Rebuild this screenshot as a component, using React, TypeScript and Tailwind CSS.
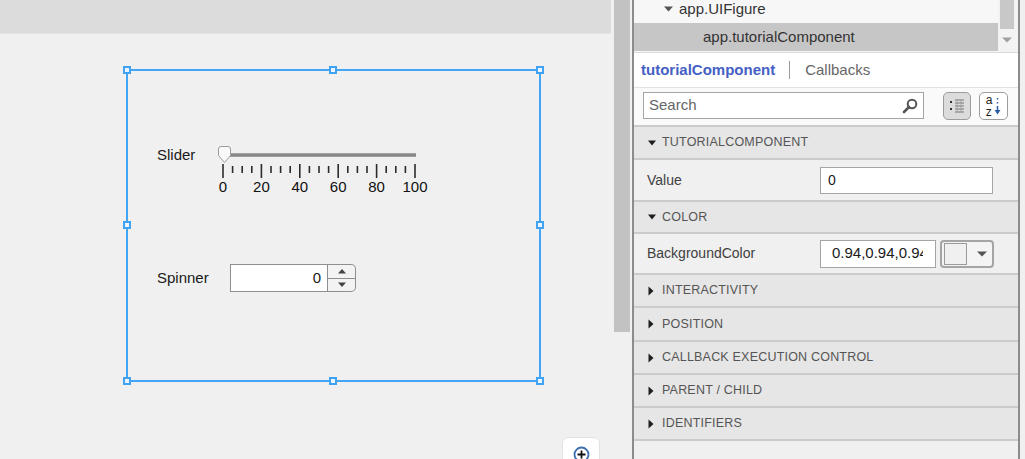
import React from "react";

const font = "font-['Liberation_Sans',Arial,sans-serif]";

function Handle({ x, y }: { x: number; y: number }) {
  return (
    <div
      className="absolute h-[8px] w-[8px] border-2 border-[#3fa2f2] bg-[#eaf5ff]"
      style={{ left: x - 4, top: y - 4 }}
    />
  );
}

function SliderDrawing() {
  const ticks = Array.from({ length: 21 }, (_, i) => i);
  return (
    <svg width="230" height="60" viewBox="0 0 230 60" className="absolute left-[212px] top-[140px]">
      <defs>
        <linearGradient id="trk" x1="0" y1="0" x2="0" y2="1">
          <stop offset="0" stopColor="#b0b0b0" />
          <stop offset="0.5" stopColor="#7c7c7c" />
          <stop offset="1" stopColor="#a8a8a8" />
        </linearGradient>
      </defs>
      <rect x="12" y="13" width="192" height="4" fill="url(#trk)" />
      {ticks.map((i) => {
        const x = 11 + i * 9.6;
        const major = i % 4 === 0;
        return (
          <line
            key={i}
            x1={x}
            x2={x}
            y1={major ? 24 : 26}
            y2={major ? 38 : 33}
            stroke="#2b2b2b"
            strokeWidth="1.6"
          />
        );
      })}
      {[0, 20, 40, 60, 80, 100].map((v, i) => (
        <text
          key={v}
          x={11 + i * 38.4}
          y="52"
          textAnchor="middle"
          fontSize="15"
          fill="#111"
          fontFamily="'Liberation Sans', Arial, sans-serif"
        >
          {v}
        </text>
      ))}
      <path
        d="M6.5 9 Q6.5 6.5 9 6.5 L16 6.5 Q18.5 6.5 18.5 9 L18.5 15.5 L12.5 22.5 L6.5 15.5 Z"
        fill="#f9f9f9"
        stroke="#9a9a9a"
        strokeWidth="1"
      />
    </svg>
  );
}

function Canvas() {
  return (
    <div className="relative h-full w-[611px] bg-[#f0f0f0]">
      <div className="h-[34px] border-b border-[#e6e6e6] bg-[#dcdcdc]" />
      {/* selected component on the design canvas */}
      <div className="absolute left-[126px] top-[69px] h-[313px] w-[415px] border-2 border-[#42a5f5]" />
      {[127, 333, 540].map((x) =>
        [70, 225, 381].map((y) =>
          x === 333 && y === 225 ? null : <Handle key={`${x}-${y}`} x={x} y={y} />
        )
      )}
      <div className="absolute left-[157px] top-[145px] text-[15px] leading-[20px] text-[#1a1a1a]">Slider</div>
      <SliderDrawing />
      <div className="absolute left-[157px] top-[268px] text-[15px] leading-[20px] text-[#1a1a1a]">Spinner</div>
      <div className="absolute left-[230px] top-[264px] flex h-[28px] w-[126px]">
        <div className="flex flex-1 items-center justify-end border border-[#8f8f8f] bg-white pr-[6px] text-[15px] text-[#1a1a1a]">
          0
        </div>
        <div className="flex w-[28px] flex-col rounded-r-[5px] border border-l-0 border-[#8f8f8f] bg-[#f3f3f3]">
          <div className="flex flex-1 items-center justify-center border-b border-[#8f8f8f]">
            <svg width="10" height="6" viewBox="0 0 10 6">
              <path d="M1 5.5 L5 1 L9 5.5 Z" fill="#444" />
            </svg>
          </div>
          <div className="flex flex-1 items-center justify-center">
            <svg width="10" height="6" viewBox="0 0 10 6">
              <path d="M1 0.5 L9 0.5 L5 5 Z" fill="#444" />
            </svg>
          </div>
        </div>
      </div>
      <div className="absolute left-[562px] top-[437px] flex h-[34px] w-[38px] justify-center rounded-md border border-[#e2e2e2] bg-white pt-[8px]">
        <svg width="17" height="17" viewBox="0 0 17 17">
          <circle cx="8.5" cy="8.5" r="7" fill="none" stroke="#3e6fb0" strokeWidth="1.8" />
          <path d="M8.5 4.5 V12.5 M4.5 8.5 H12.5" stroke="#111" strokeWidth="1.8" />
        </svg>
      </div>
    </div>
  );
}

function Caret({ open }: { open: boolean }) {
  return open ? (
    <svg width="8" height="6" viewBox="0 0 8 6">
      <path d="M0 0.5 H8 L4 5.5 Z" fill="#1e1e1e" />
    </svg>
  ) : (
    <svg width="6" height="10" viewBox="0 0 6 10">
      <path d="M0.5 0.5 V9.5 L5.5 5 Z" fill="#1e1e1e" />
    </svg>
  );
}

function Section({ title, open = false, h }: { title: string; open?: boolean; h: string }) {
  return (
    <div className={`flex ${h} items-center gap-[6px] border-b-2 border-[#cbcbcb] bg-[#e6e6e6] pl-[14px] text-[12.5px] tracking-[0.2px] text-[#555]`}>
      <span className="flex w-[8px] justify-start">
        <Caret open={open} />
      </span>
      {title}
    </div>
  );
}

function PropRow({ label, h, children }: { label: string; h: string; children: React.ReactNode }) {
  return (
    <div className={`flex ${h} items-center border-b-2 border-[#cbcbcb] bg-[#f0f0f0] pl-[13px]`}>
      <span className="w-[173px] text-[14px] text-[#404040]">{label}</span>
      {children}
    </div>
  );
}

function Inspector() {
  return (
    <div className="flex h-full w-[388px] flex-col border-x-2 border-[#8c8c8c] bg-[#f0f0f0]">
      {/* component tree */}
      <div className="flex h-[53px] border-b border-[#dadada] bg-[#f7f7f7]">
        <div className="flex flex-1 flex-col overflow-hidden">
          <div className="-mt-[5px] flex h-[28px] items-center gap-[6px] pl-[30px] text-[15px] text-[#333]">
            <svg width="9" height="6" viewBox="0 0 9 6">
              <path d="M0 0.5 H9 L4.5 5.5 Z" fill="#555" />
            </svg>
            app.UIFigure
          </div>
          <div className="flex h-[28px] items-center bg-[#c6c6c6] pl-[69px] text-[15px] text-[#333]">
            app.tutorialComponent
          </div>
        </div>
        <div className="flex w-[20px] flex-col items-center bg-[#f3f3f3] pr-[3px]">
          <div className="h-[29px] w-[14px] bg-[#c8c8c8]" />
          <svg width="10" height="6" viewBox="0 0 10 6" className="mt-[8px]">
            <path d="M0 0.5 H10 L5 5.5 Z" fill="#a0a0a0" />
          </svg>
        </div>
      </div>
      {/* tabs */}
      <div className="flex h-[35px] items-center border-b border-[#e2e2e2] bg-white pl-[7px] text-[15px]">
        <span className="font-bold text-[#4460c4]">tutorialComponent</span>
        <span className="ml-[14px] mr-[15px] h-[18px] w-px bg-[#9a9a9a]" />
        <span className="text-[#666]">Callbacks</span>
      </div>
      {/* search */}
      <div className="flex h-[39px] items-center border-b-2 border-[#cbcbcb] bg-[#fafafa] pb-[2px] pl-[9px]">
        <div className="flex h-[27px] w-[281px] items-center justify-between border border-[#a5a5a5] bg-white pl-[5px] pr-[5px] text-[15px] text-[#666]">
          Search
          <svg width="16" height="16" viewBox="0 0 16 16">
            <circle cx="10" cy="6" r="4.3" fill="none" stroke="#555" strokeWidth="2" />
            <path d="M7 9 L2 14" stroke="#555" strokeWidth="2.6" strokeLinecap="round" />
          </svg>
        </div>
        <div className="ml-[19px] flex h-[28px] w-[28px] items-center justify-center rounded-[5px] border border-[#9c9c9c] bg-[#dcdcdc]">
          <svg width="18" height="18" viewBox="0 0 18 18">
            <rect x="2" y="4" width="2" height="2" fill="#333" />
            <rect x="2" y="11" width="2" height="2" fill="#333" />
            <path d="M7 3 H16 M7 6 H16 M7 9 H16 M7 12 H16 M7 15 H16" stroke="#777" strokeWidth="1" />
            <path d="M9 3 V15 M13 3 V15" stroke="#999" strokeWidth="0.8" />
          </svg>
        </div>
        <div className="ml-[8px] flex h-[28px] w-[29px] items-center justify-center gap-[2px] rounded-[5px] border border-[#9c9c9c] bg-white">
          <div className="flex flex-col text-[12px] leading-[12px] text-[#222]">
            <span>a</span>
            <span>z</span>
          </div>
          <svg width="7" height="20" viewBox="0 0 7 20">
            <path d="M3.5 2 V3.5 M3.5 6 V7.5" stroke="#2a5fa8" strokeWidth="1.5" />
            <path d="M3.5 10 V17" stroke="#2a5fa8" strokeWidth="1.5" />
            <path d="M0.5 14 L3.5 18.5 L6.5 14 Z" fill="#2a5fa8" />
          </svg>
        </div>
      </div>
      <Section title="TUTORIALCOMPONENT" open h="h-[33px]" />
      <PropRow label="Value" h="h-[42px]">
        <div className="flex h-[27px] w-[173px] items-center border border-[#a5a5a5] bg-white pl-[7px] text-[14px] text-[#1a1a1a]">
          0
        </div>
      </PropRow>
      <Section title="COLOR" open h="h-[32px]" />
      <PropRow label="BackgroundColor" h="h-[41px]">
        <div className="flex h-[28px] w-[116px] items-center border border-[#a5a5a5] bg-white pl-[11px] pr-[12px] text-[15px] text-[#1a1a1a]">
          <span className="block w-full overflow-hidden whitespace-nowrap">0.94,0.94,0.94</span>
        </div>
        <div className="ml-[4px] flex h-[28px] w-[54px] items-center rounded-[4px] border-2 border-[#a5a5a5] bg-[#f4f4f4] pl-[2px]">
          <div className="h-[22px] w-[23px] border border-[#9a9a9a] bg-[#f0f0f0]" />
          <svg width="10" height="6" viewBox="0 0 10 6" className="ml-[10px]">
            <path d="M0 0.5 H10 L5 5.5 Z" fill="#555" />
          </svg>
        </div>
      </PropRow>
      <Section title="INTERACTIVITY" h="h-[33px]" />
      <Section title="POSITION" h="h-[34px]" />
      <Section title="CALLBACK EXECUTION CONTROL" h="h-[33px]" />
      <Section title="PARENT / CHILD" h="h-[33px]" />
      <Section title="IDENTIFIERS" h="h-[33px]" />
      <div className="flex-1 bg-[#f0f0f0]" />
    </div>
  );
}

export default function App() {
  return (
    <div className={`flex h-[459px] w-[1025px] overflow-hidden bg-[#f0f0f0] ${font}`}>
      <Canvas />
      <div className="flex w-[21px] justify-center bg-[#f0f0f0] pl-[1px]">
        <div className="h-[332px] w-[16px] bg-[#c2c2c2]" />
      </div>
      <Inspector />
    </div>
  );
}
